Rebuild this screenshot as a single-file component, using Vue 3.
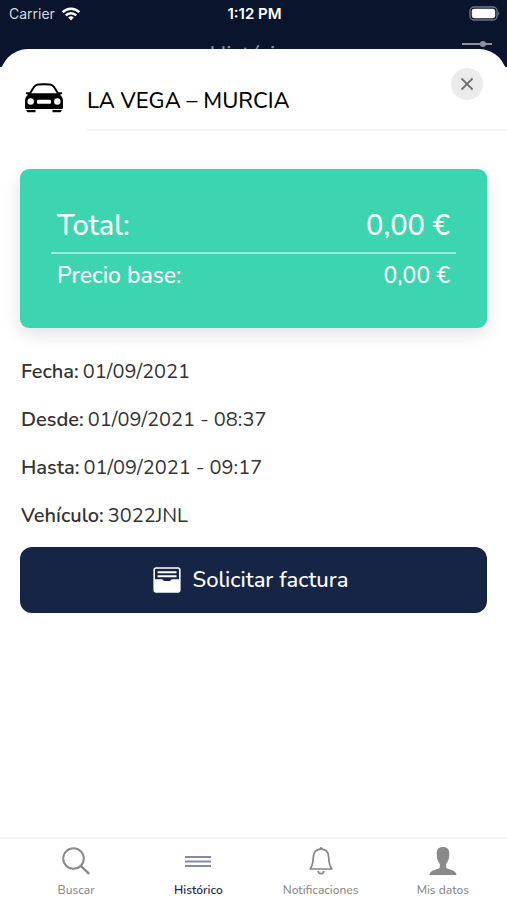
<script setup>
const prices = [
  { label: 'Total:', value: '0,00 €', main: true },
  { label: 'Precio base:', value: '0,00 €', main: false },
]
const details = [
  { label: 'Fecha:', value: '01/09/2021' },
  { label: 'Desde:', value: '01/09/2021 - 08:37' },
  { label: 'Hasta:', value: '01/09/2021 - 09:17' },
  { label: 'Vehículo:', value: '3022JNL' },
]
const tabs = [
  { id: 'search', label: 'Buscar' },
  { id: 'history', label: 'Histórico', active: true },
  { id: 'bell', label: 'Notificaciones' },
  { id: 'user', label: 'Mis datos' },
]
</script>

<template>
  <div class="screen">
    <header class="top">
      <div class="status">
        <span class="carrier">
          Carrier
          <svg width="20" height="16" viewBox="0 0 20 16" aria-hidden="true">
            <g fill="none" stroke="#fff" stroke-width="2.6">
              <path d="M1.7 6.1a11.8 11.8 0 0 1 16.6 0" />
              <path d="M4.8 9.4a7.4 7.4 0 0 1 10.4 0" />
            </g>
            <path d="M7.2 11.6a4 4 0 0 1 5.6 0L10 14.6z" fill="#fff" />
          </svg>
        </span>
        <time class="clock">1:12 PM</time>
        <svg class="battery" width="31" height="15" viewBox="0 0 31 15" aria-hidden="true">
          <rect x="1" y="1" width="27" height="13" rx="4" fill="none" stroke="#6d7485" stroke-width="1.4" />
          <rect x="2.8" y="2.8" width="23.4" height="9.4" rx="2.4" fill="#fff" />
          <path d="M29.2 5.2q2.400 2.300 0 4.600z" fill="#6d7485" />
        </svg>
      </div>
      <div class="bar">
        <h1>Histórico</h1>
        <svg class="filter" width="32" height="24" viewBox="0 0 32 24" stroke="#8c92a0" stroke-width="2" fill="#8c92a0" aria-hidden="true">
          <path d="M1 3h30M1 18h30" />
          <circle cx="22" cy="3" r="2" />
          <circle cx="10" cy="18" r="2" />
        </svg>
      </div>
    </header>

    <main class="sheet">
      <div class="heading">
        <svg class="car" width="40" height="30" viewBox="0 0 40 30" aria-hidden="true">
          <path d="M5.500 11 10 4Q11.400 1.800 14 1.500Q20 .9 26 1.500Q28.600 1.800 30 4L34.500 11" fill="none" stroke="#000" stroke-width="2" />
          <path fill="#000" d="M2 9.300q3.400-.6 4 1h28q.6-1.600 4-1v1.800l-2 .6q3 2.400 3 6.300v6.500q0 1.500-1.500 1.500h-35Q1 26 1 24.500V18q0-3.900 3-6.300l-2-.6z" />
          <circle cx="6.700" cy="18.500" r="3.200" fill="#fff" />
          <circle cx="33.300" cy="18.500" r="3.200" fill="#fff" />
          <rect x="13" y="16.800" width="14" height="4" rx="1" fill="#fff" />
          <path d="M2 27h9.500v2.200H3.500zM28.500 27H38l-1.500 2.200h-8z" fill="#000" />
        </svg>
        <h2>LA VEGA – MURCIA</h2>
        <button class="close" type="button" aria-label="Cerrar">
          <svg width="14" height="14" viewBox="0 0 14 14" aria-hidden="true">
            <path d="M1.500 1.500l11 11M12.500 1.500l-11 11" stroke="#707070" stroke-width="1.800" />
          </svg>
        </button>
      </div>

      <dl class="card">
        <div v-for="p in prices" :key="p.label" class="price" :class="{ main: p.main }">
          <dt>{{ p.label }}</dt>
          <dd>{{ p.value }}</dd>
        </div>
      </dl>

      <dl class="details">
        <div v-for="d in details" :key="d.label" class="detail">
          <dt>{{ d.label }}</dt>
          <dd>{{ d.value }}</dd>
        </div>
      </dl>

      <button class="invoice" type="button">
        <svg width="28" height="26" viewBox="0 0 28 26" aria-hidden="true">
          <rect x="1.200" y="1" width="25.600" height="24" rx="2" fill="none" stroke="#fff" stroke-width="1.600" />
          <path d="M4.500 5.300h19M4.500 9.300h19" stroke="#fff" stroke-width="2" />
          <path d="M1.200 12.200h7.600q1 0 1.400 1 .3.800 1.300.8h5q1 0 1.300-.8.400-1 1.400-1h7.600v11.300q0 1.500-1.500 1.500H2.700q-1.500 0-1.500-1.500z" fill="#fff" />
        </svg>
        Solicitar factura
      </button>
    </main>

    <nav class="tabs">
      <a v-for="t in tabs" :key="t.id" href="#" class="tab" :class="{ active: t.active }" :aria-current="t.active ? 'page' : null">
        <svg width="32" height="30" viewBox="0 0 32 30" fill="none" aria-hidden="true">
          <g v-if="t.id === 'search'" stroke="#8a8a8a" stroke-width="2">
            <circle cx="13.500" cy="12.500" r="10.300" />
            <path d="M20.800 19.800l8.400 8" stroke-width="2.400" />
          </g>
          <path v-else-if="t.id === 'history'" d="M3 11h26M3 15.500h26M3 20h26" stroke="#858a9e" stroke-width="2.200" />
          <g v-else-if="t.id === 'bell'" stroke="#858585" stroke-width="1.700">
            <circle cx="16" cy="2.500" r="1.500" fill="#858585" stroke="none" />
            <path d="M16 3.200c-4.800 0-7.500 3.200-7.700 8-.2 6-.6 8.300-3.100 11.800h21.600c-2.500-3.500-2.900-5.800-3.100-11.800-.2-4.800-2.900-8-7.700-8z" stroke-linejoin="round" />
            <path d="M13.200 25q.2 2.700 2.800 2.700t2.800-2.700" />
          </g>
          <path v-else fill="#8a8a8a" d="M16 1c-4.300 0-6.500 2.600-6.300 6.700.1 4.500 1 8 3.100 10.100v3.200c0 .8-.5 1.300-1.300 1.600l-4.700 1.700C4.200 25.200 3 26.200 2.500 29h27c-.5-2.800-1.700-3.800-4.300-4.700l-4.700-1.700c-.8-.3-1.300-.8-1.300-1.600v-3.200c2.100-2.100 3-5.600 3.100-10.100C22.500 3.600 20.300 1 16 1z" />
        </svg>
        <span>{{ t.label }}</span>
      </a>
    </nav>
  </div>
</template>

<style>
body {
  margin: 0;
}
</style>

<style scoped>
.screen {
  display: flex;
  flex-direction: column;
  min-height: 100vh;
  background: #fff;
  color: #333;
  font-family: Nunito, Lato, "Noto Sans", sans-serif;
  font-weight: 500;
}
h1,
h2,
dl,
dd {
  margin: 0;
  font-weight: 500;
}
button {
  border: 0;
  padding: 0;
  font: inherit;
}
.top {
  height: 67px;
  overflow: hidden;
  background: #0a152d;
  color: #fff;
}
.status {
  display: grid;
  grid-template-columns: 1fr auto 1fr;
  align-items: center;
  height: 27px;
  padding: 0 7px 0 9px;
  font-family: Inter, "Liberation Sans", sans-serif;
  font-size: 14px;
  font-weight: 400;
}
.carrier {
  display: flex;
  align-items: center;
  gap: 6px;
  color: #d5d8df;
}
.clock {
  font-size: 15px;
  font-weight: 600;
}
.battery {
  justify-self: end;
}
.bar {
  display: grid;
  grid-template-columns: 1fr auto 1fr;
  align-items: start;
  padding: 14px 14px 0;
}
.bar h1 {
  grid-column: 2;
  color: #8c92a0;
  font-size: 22px;
  line-height: 28px;
}
.filter {
  justify-self: end;
}
.sheet {
  position: relative;
  flex: 1;
  margin-top: -18px;
  padding-bottom: 24px;
  border-radius: 28px 28px 0 0;
  background: #fff;
}
.heading {
  display: flex;
  padding-left: 24px;
}
.car {
  flex: none;
  margin: 34px 23px 0 0;
}
.heading h2 {
  flex: 1;
  padding: 37px 0 12px;
  border-bottom: 2px solid #f4f4f4;
  color: #000;
  font-size: 22px;
  line-height: 31px;
}
.close {
  position: absolute;
  top: 19px;
  right: 24px;
  display: grid;
  place-items: center;
  width: 32px;
  height: 32px;
  border-radius: 50%;
  background: #ebebeb;
}
.card {
  margin: 38px 20px 0;
  padding: 29px 31px 33px;
  border-radius: 9px;
  background: #3dd5b0;
  box-shadow: 0 6px 18px rgba(0, 0, 0, 0.12);
  color: #fff;
}
.price {
  display: flex;
  justify-content: space-between;
  padding: 3px 6px 0;
  font-size: 23px;
  line-height: 38px;
}
.price.main {
  padding-top: 4px;
  padding-bottom: 2px;
  border-bottom: 2px solid #9eeadb;
  font-size: 29px;
  line-height: 48px;
}
.details {
  padding: 20px 21px 7px;
  font-size: 20px;
  line-height: 48px;
}
.detail {
  display: flex;
  gap: 4px;
}
.detail dt {
  font-weight: 600;
}
.detail dd {
  font-weight: 400;
}
.invoice {
  display: flex;
  align-items: center;
  justify-content: center;
  gap: 12px;
  width: calc(100% - 40px);
  height: 66px;
  margin: 0 20px;
  padding-right: 6px;
  border-radius: 12px;
  background: #162545;
  color: #fff;
  font-size: 22px;
}
.tabs {
  display: grid;
  grid-template-columns: repeat(4, 1fr);
  padding: 7px 3px 1px 15px;
  border-top: 2px solid #f4f4f4;
}
.tab {
  display: flex;
  flex-direction: column;
  align-items: center;
  gap: 5px;
  color: #8a8a8a;
  font-size: 12px;
  line-height: 18px;
  text-decoration: none;
}
.tab.active {
  color: #1f2a4d;
  font-weight: 600;
}
</style>
